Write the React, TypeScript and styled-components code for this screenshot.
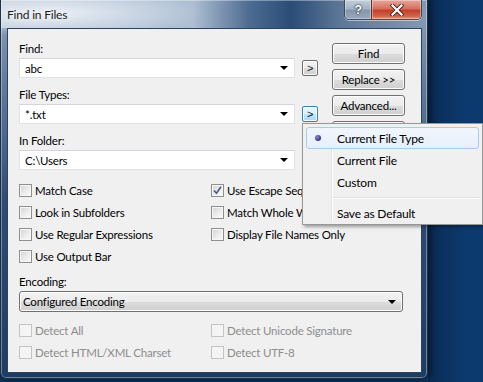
import React from 'react';
import styled, { createGlobalStyle, css } from 'styled-components';

const GlobalStyle = createGlobalStyle`
  html, body { margin: 0; padding: 0; }
  body {
    width: 483px;
    height: 382px;
    overflow: hidden;
    background: #0d3a6e;
    font-family: Lato, 'Liberation Sans', sans-serif;
    font-size: 11.5px;
    letter-spacing: -0.2px;
    color: #000;
  }
`;

const Desktop = styled.div`
  width: 483px;
  height: 382px;
  background: linear-gradient(to right, #0a2c55 0, #0d3a6e 40px) 428px 0 / 55px 100% no-repeat, #0d3a6e;
`;

const Window = styled.div`
  position: relative;
  width: 428px;
  height: 379px;
  box-sizing: border-box;
  border: 1px solid #1c2f47;
  border-top: none;
  border-radius: 0 0 6px 6px;
  display: flex;
  flex-direction: column;
  background:
    radial-gradient(ellipse 150px 24px at 50px 13px, rgba(236, 241, 247, 0.95), rgba(236, 241, 247, 0) 100%),
    linear-gradient(to right, #bccadb 0%, #aebfd2 45%, #4f6d93 58%, #2a4c77 68%, #5e7898 80%, #8399b3 100%) 0 0 / 100% 28px no-repeat,
    linear-gradient(to bottom, #8da1b9 0px, #60799b 90px, #2d4d75 200px, #1e3d63 100%);
  box-shadow: inset 0 0 0 1px rgba(255, 255, 255, 0.35), 0 0 10px 2px rgba(0, 0, 0, 0.55);
`;

const TitleBar = styled.div`
  height: 28px;
  display: flex;
  align-items: flex-start;
  flex-shrink: 0;
`;

const Title = styled.div`
  padding: 7px 0 0 6px;
  font-size: 12px;
  color: #1a1a1a;
  text-shadow: 0 0 6px #fff, 0 0 10px #fff;
  flex: 1;
`;

const CaptionGroup = styled.div`
  display: flex;
  margin-right: 5px;
  height: 19px;
  border: 1px solid #3a4a60;
  border-top: none;
  border-radius: 0 0 5px 5px;
  overflow: hidden;
  box-shadow: 0 1px 0 rgba(255, 255, 255, 0.5);
`;

const CaptionButton = styled.div<{ $close?: boolean }>`
  height: 19px;
  width: ${({ $close }) => ($close ? 49 : 26)}px;
  display: flex;
  align-items: center;
  justify-content: center;
  box-shadow: inset 0 0 0 1px rgba(255, 255, 255, 0.35);
  ${({ $close }) =>
    $close
      ? css`
          background: linear-gradient(to bottom, #e6a79b 0%, #d7705e 45%, #c4402b 55%, #d0644c 85%, #e6967f 100%);
          border-left: 1px solid #5a3530;
        `
      : css`
          background: linear-gradient(to bottom, #c2ceda 0%, #a5b4c6 45%, #8596ac 55%, #98a8bc 100%);
        `}
`;

const HelpGlyph = styled.span`
  font-family: 'Liberation Sans', sans-serif;
  font-weight: bold;
  font-size: 13px;
  color: #fff;
  text-shadow: 0 0 1px #2a3440, 0 0 1px #2a3440, 0 0 2px #2a3440;
  margin-top: -1px;
`;

const Client = styled.div`
  margin: 0 5px 0 6px;
  height: 345px;
  box-sizing: border-box;
  border: 1px solid #2c4260;
  background: #f0f0f0;
  padding: 14px 0 0 11px;
  display: flex;
  flex-direction: column;
`;

const TopSection = styled.div`
  display: flex;
  align-items: flex-start;
`;

const FieldColumn = styled.div`
  width: 299px;
  display: flex;
  flex-direction: column;
  gap: 11px;
`;

const Field = styled.div`
  display: flex;
  flex-direction: column;
`;

const Label = styled.div`
  height: 15px;
  line-height: 12px;
  color: #000;
`;

const FieldRow = styled.div`
  display: flex;
  align-items: center;
  gap: 7px;
`;

const Combo = styled.div<{ $width: number }>`
  width: ${({ $width }) => $width}px;
  height: 20px;
  box-sizing: border-box;
  border: 1px solid #dfe3e8;
  border-top-color: #d2d6dc;
  background: #fff;
  display: flex;
  align-items: center;
  padding: 0 6px 0 5px;
`;

const ComboText = styled.span`
  flex: 1;
`;

const Arrow = styled.span`
  width: 0;
  height: 0;
  border-left: 4px solid transparent;
  border-right: 4px solid transparent;
  border-top: 4px solid #000;
`;

const MiniButton = styled.div<{ $hot?: boolean }>`
  width: 16px;
  height: 16px;
  box-sizing: border-box;
  border: 1px solid ${({ $hot }) => ($hot ? '#3c7fb1' : '#707070')};
  border-radius: 2px;
  background: ${({ $hot }) =>
    $hot
      ? 'linear-gradient(to bottom, #eaf6fd 0%, #d9f0fc 50%, #bee6fd 51%, #a7d9f5 100%)'
      : 'linear-gradient(to bottom, #f2f2f2 0%, #ebebeb 50%, #dddddd 51%, #cfcfcf 100%)'};
  box-shadow: inset 0 0 0 1px rgba(255, 255, 255, 0.8);
  display: flex;
  align-items: center;
  justify-content: center;
  font-family: 'Liberation Sans', sans-serif;
  font-size: 11px;
  line-height: 1;
  color: #111;
`;

const ButtonColumn = styled.div`
  margin-left: 14px;
  width: 73px;
  display: flex;
  flex-direction: column;
  gap: 5px;
`;

const PushButton = styled.div`
  height: 21px;
  box-sizing: border-box;
  border: 1px solid #707070;
  border-radius: 3px;
  background: linear-gradient(to bottom, #f2f2f2 0%, #ebebeb 50%, #dddddd 51%, #cfcfcf 100%);
  box-shadow: inset 0 0 0 1px #fcfcfc;
  display: flex;
  align-items: center;
  justify-content: center;
`;

const CheckGrid = styled.div<{ $top: number }>`
  margin-top: ${({ $top }) => $top}px;
  display: grid;
  grid-template-columns: 192px 1fr;
  grid-auto-rows: 22px;
`;

const CheckItem = styled.div<{ $disabled?: boolean }>`
  display: flex;
  align-items: center;
  gap: 3px;
  color: ${({ $disabled }) => ($disabled ? '#8d8d8d' : '#000')};
  white-space: nowrap;
`;

const Box = styled.span<{ $disabled?: boolean }>`
  width: 13px;
  height: 13px;
  box-sizing: border-box;
  flex-shrink: 0;
  border: 1px solid ${({ $disabled }) => ($disabled ? '#c4c4c4' : '#8e8f8f')};
  background: ${({ $disabled }) =>
    $disabled ? '#f4f4f4' : 'linear-gradient(135deg, #d2d2d2 0%, #ececec 55%, #fbfbfb 100%)'};
  box-shadow: inset 0 0 0 1px ${({ $disabled }) => ($disabled ? '#f4f4f4' : '#f6f6f6')};
  display: flex;
  align-items: center;
  justify-content: center;
`;

const Select = styled.div`
  width: 384px;
  height: 21px;
  box-sizing: border-box;
  border: 1px solid #707070;
  border-radius: 3px;
  background: linear-gradient(to bottom, #f2f2f2 0%, #ebebeb 50%, #dddddd 51%, #cfcfcf 100%);
  box-shadow: inset 0 0 0 1px #fcfcfc;
  display: flex;
  align-items: center;
  padding: 0 6px 0 3px;
`;

const EncodingLabel = styled(Label)`
  margin-top: 9px;
`;

const Menu = styled.div`
  position: absolute;
  left: 301px;
  top: 123px;
  width: 181px;
  box-sizing: border-box;
  border: 1px solid #979797;
  background: #f0f0f0;
  padding: 3px 0 0;
  box-shadow: 2px 2px 3px rgba(0, 0, 0, 0.35);

  &::before {
    content: '';
    position: absolute;
    left: 28px;
    top: 2px;
    bottom: 2px;
    width: 1px;
    background: #e2e3e3;
    box-shadow: 1px 0 0 #fff;
  }
`;

const MenuItem = styled.div<{ $active?: boolean }>`
  position: relative;
  height: 22px;
  box-sizing: border-box;
  margin: 0 3px 0 3px;
  padding-left: 30px;
  display: flex;
  align-items: center;
  font-size: 12px;
  border: 1px solid ${({ $active }) => ($active ? '#a8cbf0' : 'transparent')};
  border-radius: 3px;
  background: ${({ $active }) =>
    $active ? 'linear-gradient(to bottom, #f1f6fd 0%, #e6effa 100%)' : 'transparent'};
  z-index: 1;
`;

const Bullet = styled.span`
  position: absolute;
  left: 8px;
  top: 7px;
  width: 6px;
  height: 6px;
  border-radius: 50%;
  background: radial-gradient(circle at 35% 35%, #8c8fd6 0%, #3d3f8e 60%, #2b2d70 100%);
`;

const Separator = styled.div`
  height: 9px;
  margin-left: 29px;
  margin-right: 3px;
  display: flex;
  align-items: center;

  &::after {
    content: '';
    flex: 1;
    height: 1px;
    background: #e0e0e0;
    box-shadow: 0 1px 0 #fff;
  }
`;

const CloseIcon = () => (
  <svg width="14" height="12" viewBox="0 0 14 12">
    <path d="M2.5 1.5 L11.5 10.5 M11.5 1.5 L2.5 10.5" stroke="#4a2420" strokeWidth="4" strokeLinecap="square" />
    <path d="M2.5 1.5 L11.5 10.5 M11.5 1.5 L2.5 10.5" stroke="#fff" strokeWidth="2.2" strokeLinecap="square" />
  </svg>
);

const CheckMark = () => (
  <svg width="9" height="9" viewBox="0 0 9 9">
    <path d="M1 4.5 L3.5 7.2 L8 0.8" stroke="#4a5a88" strokeWidth="1.6" fill="none" />
  </svg>
);

interface CheckProps {
  label: string;
  checked?: boolean;
  disabled?: boolean;
}

const Check: React.FC<CheckProps> = ({ label, checked, disabled }) => (
  <CheckItem $disabled={disabled}>
    <Box $disabled={disabled}>{checked && <CheckMark />}</Box>
    {label}
  </CheckItem>
);

export default function App() {
  return (
    <>
      <GlobalStyle />
      <Desktop>
        <Window>
          <TitleBar>
            <Title>Find in Files</Title>
            <CaptionGroup>
              <CaptionButton>
                <HelpGlyph>?</HelpGlyph>
              </CaptionButton>
              <CaptionButton $close>
                <CloseIcon />
              </CaptionButton>
            </CaptionGroup>
          </TitleBar>

          <Client>
            <TopSection>
              <FieldColumn>
                <Field>
                  <Label>Find:</Label>
                  <FieldRow>
                    <Combo $width={276}>
                      <ComboText>abc</ComboText>
                      <Arrow />
                    </Combo>
                    <MiniButton>&gt;</MiniButton>
                  </FieldRow>
                </Field>
                <Field>
                  <Label>File Types:</Label>
                  <FieldRow>
                    <Combo $width={276}>
                      <ComboText>*.txt</ComboText>
                      <Arrow />
                    </Combo>
                    <MiniButton $hot>&gt;</MiniButton>
                  </FieldRow>
                </Field>
                <Field>
                  <Label>In Folder:</Label>
                  <FieldRow>
                    <Combo $width={276}>
                      <ComboText>C:\Users</ComboText>
                      <Arrow />
                    </Combo>
                  </FieldRow>
                </Field>
              </FieldColumn>

              <ButtonColumn>
                <PushButton>Find</PushButton>
                <PushButton>Replace &gt;&gt;</PushButton>
                <PushButton>Advanced...</PushButton>
                <PushButton />
              </ButtonColumn>
            </TopSection>

            <CheckGrid $top={9}>
              <Check label="Match Case" />
              <Check label="Use Escape Sequences" checked />
              <Check label="Look in Subfolders" />
              <Check label="Match Whole Word" />
              <Check label="Use Regular Expressions" />
              <Check label="Display File Names Only" />
              <Check label="Use Output Bar" />
            </CheckGrid>

            <EncodingLabel>Encoding:</EncodingLabel>
            <Select>
              <ComboText>Configured Encoding</ComboText>
              <Arrow />
            </Select>

            <CheckGrid $top={7}>
              <Check label="Detect All" disabled />
              <Check label="Detect Unicode Signature" disabled />
              <Check label="Detect HTML/XML Charset" disabled />
              <Check label="Detect UTF-8" disabled />
            </CheckGrid>
          </Client>

          <Menu>
            <MenuItem $active>
              <Bullet />
              Current File Type
            </MenuItem>
            <MenuItem>Current File</MenuItem>
            <MenuItem>Custom</MenuItem>
            <Separator />
            <MenuItem>Save as Default</MenuItem>
          </Menu>
        </Window>
      </Desktop>
    </>
  );
}
